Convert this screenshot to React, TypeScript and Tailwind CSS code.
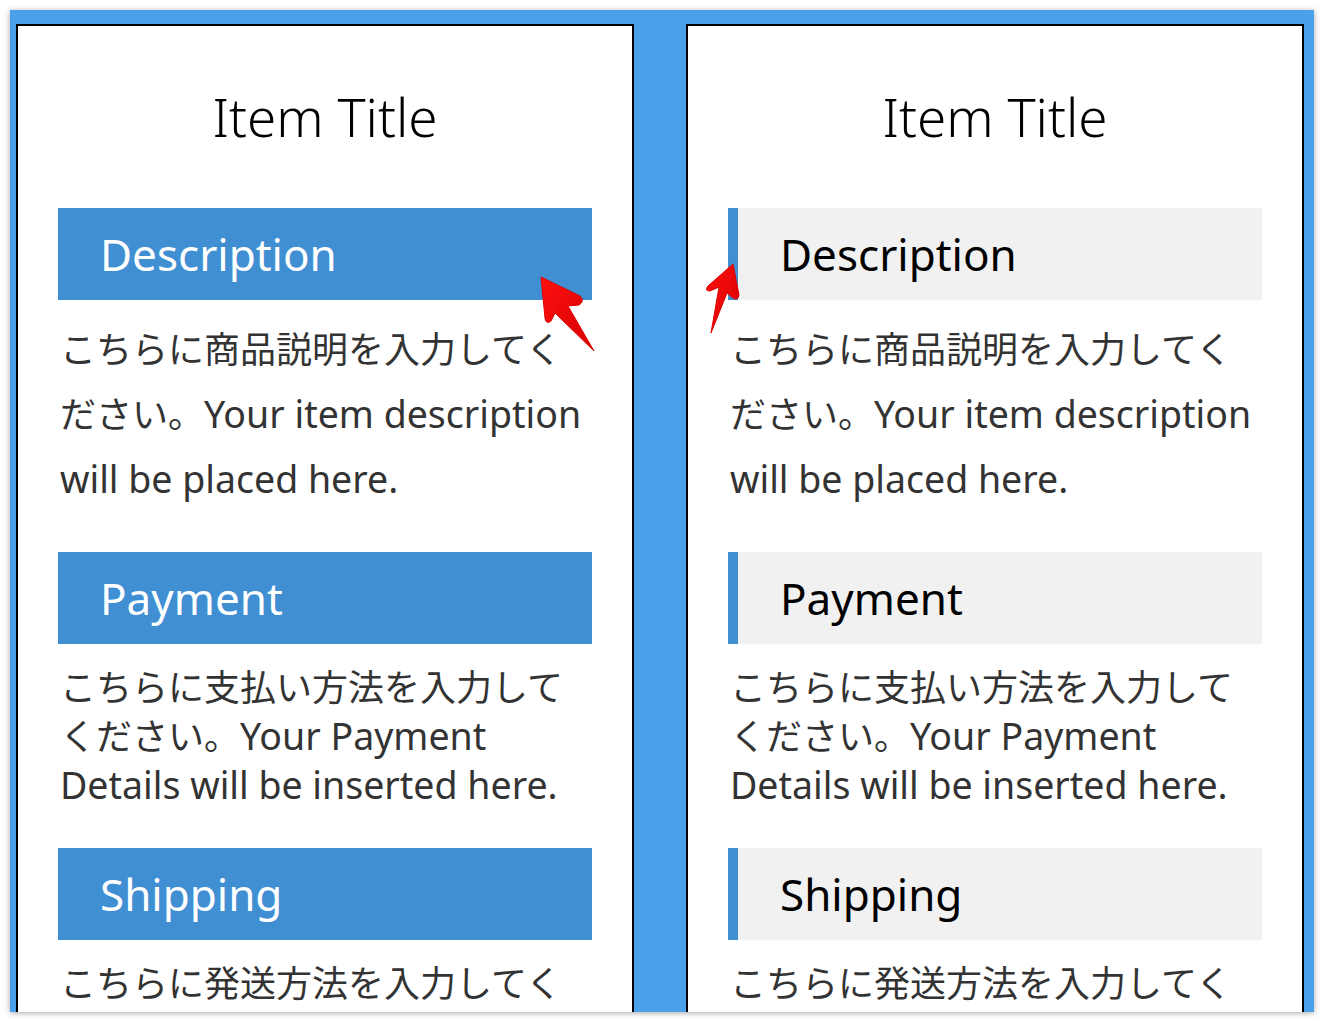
const font = { fontFamily: '"Noto Sans", "Noto Sans CJK JP", sans-serif' };

type Section = { title: string; ja: string; en: string; loose?: boolean };

const sections: Section[] = [
  {
    title: "Description",
    ja: "こちらに商品説明を入力してください。",
    en: "Your item description will be placed here.",
    loose: true,
  },
  {
    title: "Payment",
    ja: "こちらに支払い方法を入力してください。",
    en: "Your Payment Details will be inserted here.",
  },
  {
    title: "Shipping",
    ja: "こちらに発送方法を入力してください。",
    en: "Your shipping details will be placed here.",
  },
];

function Panel({ variant }: { variant: "solid" | "accent" }) {
  return (
    <div className="w-[618px] shrink-0 border-2 border-b-0 border-black bg-white overflow-hidden px-10">
      <h1 className="text-center text-[53px] leading-none text-black pt-[64px] pb-[65px] font-light">
        Item Title
      </h1>
      {sections.map((s) => (
        <div key={s.title}>
          {variant === "solid" ? (
            <h2 className="h-[92px] flex items-center bg-[#418fd3] text-white text-[44px] pl-[42px]">
              {s.title}
            </h2>
          ) : (
            <h2 className="h-[92px] flex items-center bg-[#f1f1f1] border-l-[10px] border-[#418fd3] text-black text-[44px] pl-[42px]">
              {s.title}
            </h2>
          )}
          <p
            className={
              "pl-[2px] text-[36px] text-[#333333] " +
              (s.loose ? "mt-[18px] mb-10 leading-[64px]" : "mt-5 mb-[38px] leading-[48px]")
            }
          >
            {s.ja}
            <span className="text-[37.5px]">{s.en}</span>
          </p>
        </div>
      ))}
    </div>
  );
}

function Arrows() {
  return (
    <svg className="absolute left-0 top-0 pointer-events-none" width="1324" height="1022">
      <defs>
        <linearGradient id="red" x1="0" y1="0" x2="1" y2="1">
          <stop offset="0" stopColor="#ff1010" />
          <stop offset="1" stopColor="#d40000" />
        </linearGradient>
      </defs>
      <path
        d="M541 277 L580 296 Q585 301 579 305 L568 306 L594 351 L555 313 L551 321 Q546 325 545 318 Z"
        fill="url(#red)"
        stroke="#e00000"
        strokeWidth="1"
        strokeLinejoin="round"
      />
      <path
        d="M733 264 L739 295 Q738 301 733 298 L727 293 L711 333 L719 287 L710 291 Q704 291 708 286 Z"
        fill="url(#red)"
        stroke="#e00000"
        strokeWidth="1"
        strokeLinejoin="round"
      />
    </svg>
  );
}

export default function App() {
  return (
    <div className="relative w-[1324px] h-[1022px] bg-white p-[10px] overflow-hidden" style={font}>
      <div className="h-[1002px] bg-[#4aa0e9] shadow-[0_1px_6px_rgba(0,0,0,0.35)] flex gap-[52px] pt-[14px] pl-[6px] overflow-hidden">
        <Panel variant="solid" />
        <Panel variant="accent" />
      </div>
      <Arrows />
    </div>
  );
}
